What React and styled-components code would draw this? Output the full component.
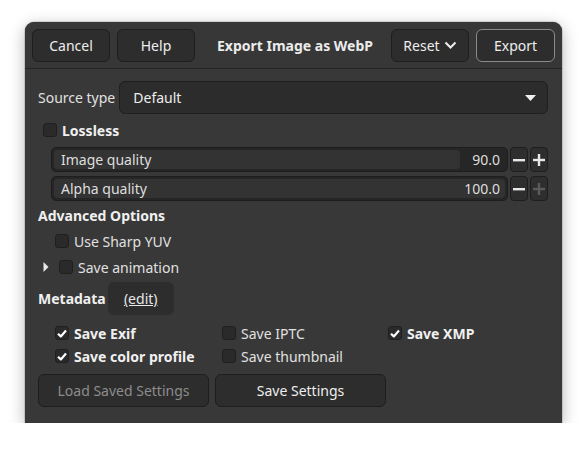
import React from 'react';
import styled, { createGlobalStyle } from 'styled-components';

const Global = createGlobalStyle`
  html, body { margin: 0; background: #ffffff; }
  body { font-family: "Noto Sans", "Open Sans", sans-serif; font-size: 14px; color: #e8e8e8; }
`;

const Window = styled.div`
  margin: 22px 0 0 25px;
  width: 537px;
  height: 401px;
  background: #383838;
  border-radius: 9px 9px 0 0;
  box-shadow: 0 4px 16px rgba(0, 0, 0, 0.3), 0 0 0 1px rgba(0, 0, 0, 0.12);
  display: flex;
  flex-direction: column;
  overflow: hidden;
`;

const HeaderBar = styled.div`
  height: 47px;
  box-sizing: border-box;
  padding: 7px 7px 0 7px;
  display: flex;
  align-items: flex-start;
  gap: 7px;
  border-bottom: 1px solid #242424;
  background: #373737;
`;

const Button = styled.button`
  box-sizing: border-box;
  width: ${p => p.$w || 78}px;
  height: 33px;
  background: #2d2d2d;
  border: 1px solid ${p => (p.$accent ? '#8a8a8a' : '#1e1e1e')};
  border-radius: 6px;
  color: ${p => (p.$disabled ? '#8c8c8c' : '#eeeeee')};
  font: inherit;
  font-size: 14px;
  display: flex;
  align-items: center;
  justify-content: center;
  gap: 4px;
  padding: 0;
`;

const Title = styled.div`
  flex: 1;
  text-align: center;
  font-weight: 700;
  line-height: 33px;
  color: #ececec;
  padding-left: 4px;
`;

const Body = styled.div`
  padding: 12px 14px 0 13px;
  display: flex;
  flex-direction: column;
`;

const Row = styled.div`
  display: flex;
  align-items: center;
  height: ${p => p.$h ?? 22}px;
  margin-top: ${p => p.$mt ?? 0}px;
  padding-left: ${p => p.$pl ?? 0}px;
  gap: ${p => p.$gap ?? 5}px;
`;

const Label = styled.span`
  font-weight: ${p => (p.$bold ? 700 : 400)};
  color: ${p => (p.$bold ? '#f0f0f0' : '#e0e0e0')};
  white-space: nowrap;
`;

const Combo = styled.div`
  flex: 1;
  height: 33px;
  box-sizing: border-box;
  background: #2c2c2c;
  border: 1px solid #1f1f1f;
  border-radius: 6px;
  display: flex;
  align-items: center;
  justify-content: space-between;
  padding: 0 11px 0 13px;
  color: #eeeeee;
`;

const Box = styled.span`
  width: 14px;
  height: 14px;
  box-sizing: border-box;
  border: 1px solid #1f1f1f;
  border-radius: 3px;
  background: #2a2a2a;
  display: inline-flex;
  align-items: center;
  justify-content: center;
  flex: none;
`;

const SpinRow = styled.div`
  display: flex;
  align-items: stretch;
  height: 25px;
  margin-top: ${p => p.$mt ?? 0}px;
  padding-left: 13px;
  gap: 2px;
`;

const Trough = styled.div`
  position: relative;
  flex: 1;
  box-sizing: border-box;
  background: #262626;
  border: 1px solid #1d1d1d;
  border-radius: 5px;
  display: flex;
  align-items: center;
  justify-content: space-between;
  padding: 0 7px 0 9px;
  overflow: hidden;
`;

const Fill = styled.div`
  position: absolute;
  left: 2px;
  top: 2px;
  bottom: 2px;
  background: #333333;
  border-radius: 4px;
`;

const SpinText = styled.span`
  position: relative;
  color: #dedede;
`;

const StepButton = styled.div`
  width: 18px;
  box-sizing: border-box;
  background: #2e2e2e;
  border: 1px solid #1e1e1e;
  border-radius: 4px;
  display: flex;
  align-items: center;
  justify-content: center;
`;

const EditButton = styled.div`
  width: 66px;
  height: 33px;
  margin-left: 2px;
  background: #2d2d2d;
  border-radius: 6px;
  display: flex;
  align-items: center;
  justify-content: center;
  text-decoration: underline;
  color: #e6e6e6;
`;

const Grid = styled.div`
  display: grid;
  grid-template-columns: 167px 166px auto;
  row-gap: 1px;
  margin-top: 7px;
  padding-left: 17px;
`;

const Cell = styled.div`
  display: flex;
  align-items: center;
  gap: 5px;
  height: 22px;
`;

const Footer = styled.div`
  display: flex;
  gap: 6px;
  margin-top: 7px;
`;

const Check = () => (
  <svg width="10" height="9" viewBox="0 0 10 9">
    <path d="M1 4.8 L3.8 7.4 L9 1.6" fill="none" stroke="#ffffff" strokeWidth="2.2" strokeLinejoin="round" />
  </svg>
);

const CheckBox = ({ checked }) => <Box>{checked && <Check />}</Box>;

const Minus = () => (
  <svg width="12" height="12" viewBox="0 0 12 12">
    <rect x="0" y="5" width="12" height="2.4" fill="#e8e8e8" />
  </svg>
);

const Plus = ({ dim }) => (
  <svg width="12" height="12" viewBox="0 0 12 12">
    <rect x="0" y="4.8" width="12" height="2.4" fill={dim ? '#5a5a5a' : '#e8e8e8'} />
    <rect x="4.8" y="0" width="2.4" height="12" fill={dim ? '#5a5a5a' : '#e8e8e8'} />
  </svg>
);

function Spin({ label, value, pct, dimPlus, mt }) {
  return (
    <SpinRow $mt={mt}>
      <Trough>
        <Fill style={{ width: `calc(${pct}% - 4px)` }} />
        <SpinText>{label}</SpinText>
        <SpinText>{value}</SpinText>
      </Trough>
      <StepButton><Minus /></StepButton>
      <StepButton><Plus dim={dimPlus} /></StepButton>
    </SpinRow>
  );
}

export default function App() {
  return (
    <>
      <Global />
      <Window>
        <HeaderBar>
          <Button>Cancel</Button>
          <Button>Help</Button>
          <Title>Export Image as WebP</Title>
          <Button>
            Reset
            <svg width="13" height="9" viewBox="0 0 13 9">
              <path d="M1.5 1.5 L6.5 6.5 L11.5 1.5" fill="none" stroke="#eeeeee" strokeWidth="2" />
            </svg>
          </Button>
          <Button $accent $w={79}>Export</Button>
        </HeaderBar>
        <Body>
          <Row $h={33} $gap={4}>
            <Label>Source type</Label>
            <Combo>
              <span>Default</span>
              <svg width="11" height="6" viewBox="0 0 11 6">
                <path d="M0 0 L11 0 L5.5 6 Z" fill="#f0f0f0" />
              </svg>
            </Combo>
          </Row>
          <Row $mt={5} $pl={5}>
            <CheckBox />
            <Label $bold>Lossless</Label>
          </Row>
          <Spin mt={6} label="Image quality" value="90.0" pct={90} />
          <Spin mt={4} label="Alpha quality" value="100.0" pct={100} dimPlus />
          <Row $mt={3}>
            <Label $bold>Advanced Options</Label>
          </Row>
          <Row $mt={4} $pl={17}>
            <CheckBox />
            <Label>Use Sharp YUV</Label>
          </Row>
          <Row $mt={4} $pl={5} $gap={0}>
            <svg width="16" height="10" viewBox="0 0 16 10">
              <path d="M0.5 0 L5.5 5 L0.5 10 Z" fill="#e8e8e8" />
            </svg>
            <CheckBox />
            <Label style={{ marginLeft: 5 }}>Save animation</Label>
          </Row>
          <Row $h={33} $mt={4} $gap={0}>
            <Label $bold>Metadata</Label>
            <EditButton>(edit)</EditButton>
          </Row>
          <Grid>
            <Cell><CheckBox checked /><Label $bold>Save Exif</Label></Cell>
            <Cell><CheckBox /><Label>Save IPTC</Label></Cell>
            <Cell><CheckBox checked /><Label $bold>Save XMP</Label></Cell>
            <Cell><CheckBox checked /><Label $bold>Save color profile</Label></Cell>
            <Cell><CheckBox /><Label>Save thumbnail</Label></Cell>
            <Cell />
          </Grid>
          <Footer>
            <Button $w={171} $disabled>Load Saved Settings</Button>
            <Button $w={171}>Save Settings</Button>
          </Footer>
        </Body>
      </Window>
    </>
  );
}
